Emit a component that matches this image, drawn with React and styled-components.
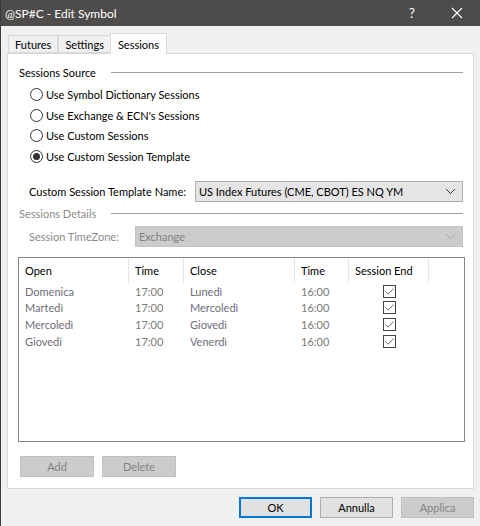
import React, { useState } from 'react'
import styled, { createGlobalStyle } from 'styled-components'

const GlobalStyle = createGlobalStyle`
  html, body {
    margin: 0;
    padding: 0;
    background: #f0f0f0;
    overflow: hidden;
  }
  * { box-sizing: border-box; }
`

const rows = [
  { open: 'Domenica', openTime: '17:00', close: 'Lunedì', closeTime: '16:00', end: true },
  { open: 'Martedì', openTime: '17:00', close: 'Mercoledì', closeTime: '16:00', end: true },
  { open: 'Mercoledì', openTime: '17:00', close: 'Giovedì', closeTime: '16:00', end: true },
  { open: 'Giovedì', openTime: '17:00', close: 'Venerdì', closeTime: '16:00', end: true },
]

const sources = [
  'Use Symbol Dictionary Sessions',
  "Use Exchange & ECN's Sessions",
  'Use Custom Sessions',
  'Use Custom Session Template',
]

const columns = [
  { label: 'Open', width: 110 },
  { label: 'Time', width: 55 },
  { label: 'Close', width: 111 },
  { label: 'Time', width: 54 },
  { label: 'Session End', width: 80 },
]

const Chevron = ({ color }) => (
  <svg width="11" height="7" viewBox="0 0 11 7">
    <path d="M1 1 L5.5 5.5 L10 1" fill="none" stroke={color} strokeWidth="1" />
  </svg>
)

const App = () => {
  const [source, setSource] = useState(3)

  return (
    <>
      <GlobalStyle />
      <Window>
        <TitleBar>
          <Title>@SP#C - Edit Symbol</Title>
          <TitleButton>?</TitleButton>
          <TitleButton>
            <svg width="12" height="12" viewBox="0 0 12 12">
              <path d="M1 1 L11 11 M11 1 L1 11" stroke="#fff" strokeWidth="1.1" />
            </svg>
          </TitleButton>
        </TitleBar>

        <Body>
          <Tabs>
            <Tab>Futures</Tab>
            <Tab>Settings</Tab>
            <Tab active>Sessions</Tab>
          </Tabs>

          <Panel>
            <GroupHeader>
              <span>Sessions Source</span>
              <Rule />
            </GroupHeader>

            <RadioList>
              {sources.map((s, i) => (
                <RadioRow key={s} onClick={() => setSource(i)}>
                  <RadioCircle checked={source === i} />
                  <span>{s}</span>
                </RadioRow>
              ))}
            </RadioList>

            <FieldRow>
              <FieldLabel>Custom Session Template Name:</FieldLabel>
              <Select>
                <span>US Index Futures (CME, CBOT) ES NQ YM</span>
                <Chevron color="#333" />
              </Select>
            </FieldRow>

            <GroupHeader disabled>
              <span>Sessions Details</span>
              <Rule />
            </GroupHeader>

            <FieldRow disabled>
              <FieldLabel disabled>Session TimeZone:</FieldLabel>
              <Select disabled>
                <span>Exchange</span>
                <Chevron color="#a8a8a8" />
              </Select>
            </FieldRow>

            <Table>
              <HeaderRow>
                {columns.map((c, i) => (
                  <HeaderCell key={i} style={{ width: c.width }}>{c.label}</HeaderCell>
                ))}
              </HeaderRow>
              {rows.map((r, i) => (
                <DataRow key={i}>
                  <Cell w={110} day>{r.open}</Cell>
                  <Cell w={55}>{r.openTime}</Cell>
                  <Cell w={111} day>{r.close}</Cell>
                  <Cell w={54}>{r.closeTime}</Cell>
                  <CheckCell>
                    <CheckBox>
                      {r.end && (
                        <svg width="11" height="11" viewBox="0 0 11 11">
                          <path d="M1.5 5.5 L4.2 8.2 L9.5 2.5" fill="none" stroke="#6a6a6a" strokeWidth="1" />
                        </svg>
                      )}
                    </CheckBox>
                  </CheckCell>
                </DataRow>
              ))}
            </Table>

            <ButtonRow>
              <Button disabled>Add</Button>
              <Button disabled>Delete</Button>
            </ButtonRow>
          </Panel>

          <Footer>
            <Button wide primary>OK</Button>
            <Button wide>Annulla</Button>
            <Button wide disabled>Applica</Button>
          </Footer>
        </Body>
      </Window>
    </>
  )
}

const Window = styled.div`
  width: 480px;
  height: 526px;
  display: flex;
  flex-direction: column;
  border-left: 1px solid #3a3a3a;
  font-family: Lato, "Noto Sans", sans-serif;
  font-size: 11px;
  color: #000;
`

const TitleBar = styled.div`
  height: 26px;
  background: #4e4c4a;
  display: flex;
  align-items: center;
  color: #fff;
`

const Title = styled.div`
  flex: 1;
  padding-left: 4px;
  font-size: 12px;
`

const TitleButton = styled.div`
  width: 44px;
  height: 26px;
  display: flex;
  align-items: center;
  justify-content: center;
  font-size: 13px;
  &:last-child { width: 46px; }
`

const Body = styled.div`
  flex: 1;
  display: flex;
  flex-direction: column;
  padding: 7px 6px 0 6px;
`

const Tabs = styled.div`
  display: flex;
  align-items: flex-end;
  height: 20px;
  padding-left: 1px;
  position: relative;
  z-index: 1;
`

const Tab = styled.div`
  height: ${p => (p.active ? '21px' : '18px')};
  padding: 0 ${p => (p.active ? '7px' : '6px')};
  margin-bottom: ${p => (p.active ? '-1px' : '0')};
  display: flex;
  align-items: center;
  background: ${p => (p.active ? '#fff' : '#f0f0f0')};
  border: 1px solid #d9d9d9;
  border-bottom: ${p => (p.active ? 'none' : '1px solid #d9d9d9')};
  margin-left: ${p => (p.active ? '-1px' : '0')};
  & + & { border-left: ${p => (p.active ? '1px solid #d9d9d9' : 'none')}; }
`

const Panel = styled.div`
  height: 436px;
  width: 467px;
  background: #fff;
  border: 1px solid #d9d9d9;
  display: flex;
  flex-direction: column;
  padding: 10px 10px 0 11px;
`

const GroupHeader = styled.div`
  display: flex;
  align-items: center;
  height: 17px;
  gap: 15px;
  color: ${p => (p.disabled ? '#8a8a8a' : '#000')};
  white-space: nowrap;
`

const Rule = styled.div`
  flex: 1;
  height: 1px;
  background: #a0a0a0;
`

const RadioList = styled.div`
  display: flex;
  flex-direction: column;
  padding: 3px 0 0 11px;
  margin-bottom: 14px;
`

const RadioRow = styled.div`
  display: flex;
  align-items: center;
  height: 20.7px;
  gap: 3px;
`

const RadioCircle = styled.div`
  width: 13px;
  height: 13px;
  border-radius: 50%;
  border: 1px solid #333;
  background: #fff;
  display: flex;
  align-items: center;
  justify-content: center;
  &::after {
    content: '';
    width: 7px;
    height: 7px;
    border-radius: 50%;
    background: #333;
    display: ${p => (p.checked ? 'block' : 'none')};
  }
`

const FieldRow = styled.div`
  display: flex;
  align-items: center;
  padding-left: 10px;
  height: 21px;
  margin-bottom: ${p => (p.disabled ? '10px' : '3px')};
  margin-top: ${p => (p.disabled ? '4px' : '0')};
`

const FieldLabel = styled.div`
  flex: 1;
  white-space: nowrap;
  color: ${p => (p.disabled ? '#8a8a8a' : '#000')};
`

const Select = styled.div`
  width: ${p => (p.disabled ? '328px' : '268px')};
  height: 21px;
  border: 1px solid ${p => (p.disabled ? '#c4c4c4' : '#adadad')};
  background: ${p => (p.disabled ? '#cccccc' : '#e5e5e5')};
  color: ${p => (p.disabled ? '#838383' : '#000')};
  display: flex;
  align-items: center;
  justify-content: space-between;
  padding: 0 6px 0 3px;
`

const Table = styled.div`
  width: 447px;
  height: 185px;
  border: 1px solid #828790;
  display: flex;
  flex-direction: column;
  margin-left: -1px;
`

const HeaderRow = styled.div`
  display: flex;
  height: 25px;
`

const HeaderCell = styled.div`
  padding-left: 6px;
  display: flex;
  align-items: center;
  border-right: 1px solid #e5e5e5;
`

const DataRow = styled.div`
  display: flex;
  height: 16.8px;
  align-items: center;
`

const Cell = styled.div`
  width: ${p => p.w}px;
  padding-left: 6px;
  color: ${p => (p.day ? '#6d6d7a' : '#7a7a7a')};
`

const CheckCell = styled.div`
  width: 80px;
  display: flex;
  justify-content: center;
`

const CheckBox = styled.div`
  width: 13px;
  height: 13px;
  border: 1px solid #444;
  background: #fff;
  display: flex;
  align-items: center;
  justify-content: center;
`

const ButtonRow = styled.div`
  display: flex;
  gap: 8px;
  margin-top: 14px;
  padding-left: 1px;
`

const Button = styled.div`
  width: ${p => (p.wide ? '73px' : '74px')};
  height: 21px;
  display: flex;
  align-items: center;
  justify-content: center;
  background: ${p => (p.disabled ? '#cccccc' : '#e1e1e1')};
  color: ${p => (p.disabled ? '#838383' : '#000')};
  border: ${p => (p.primary ? '2px solid #0078d7' : p.disabled ? '1px solid #bfbfbf' : '1px solid #adadad')};
`

const Footer = styled.div`
  display: flex;
  justify-content: flex-end;
  gap: 8px;
  padding-top: 8px;
`

export default App
